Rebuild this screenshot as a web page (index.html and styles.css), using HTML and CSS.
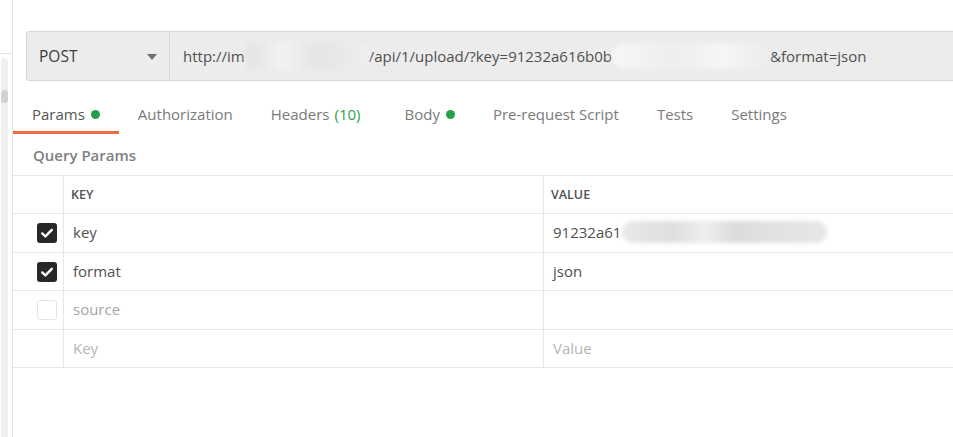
FILE: index.html
```html
<!DOCTYPE html>
<html lang="en">
<head>
<meta charset="utf-8">
<title>Request</title>
<link rel="stylesheet" href="styles.css">
</head>
<body>
<div class="app">
  <aside class="side">
    <div class="side-top"></div>
    <div class="scroll"><div class="thumb"></div></div>
  </aside>
  <main class="main">
    <div class="reqbar">
      <div class="method">
        <span class="method-name">POST</span>
        <span class="caret"></span>
      </div>
      <div class="url">http://im<span class="blur blur-url1"></span>/api/1/upload/?key=91232a616b0b<span class="blur blur-url2"></span>&amp;format=json</div>
    </div>
    <nav class="tabs">
      <div class="tab active">Params<span class="dot"></span></div>
      <div class="tab">Authorization</div>
      <div class="tab">Headers <span class="count">(10)</span></div>
      <div class="tab tab-body">Body<span class="dot"></span></div>
      <div class="tab">Pre-request Script</div>
      <div class="tab">Tests</div>
      <div class="tab">Settings</div>
    </nav>
    <div class="qp">Query Params</div>
    <div class="table">
      <div class="row head">
        <div class="cell sel"></div>
        <div class="cell hcell">KEY</div>
        <div class="cell hcell last">VALUE</div>
      </div>
      <div class="row">
        <div class="cell sel"><span class="cb on"><svg viewBox="0 0 20 20" width="20" height="20"><path d="M5.2 10.4 L8.4 13.4 L14.8 6.8" fill="none" stroke="#fff" stroke-width="2.4" stroke-linecap="round" stroke-linejoin="round"/></svg></span></div>
        <div class="cell txt">key</div>
        <div class="cell txt last">91232a61<span class="blur blur-val"></span></div>
      </div>
      <div class="row">
        <div class="cell sel"><span class="cb on"><svg viewBox="0 0 20 20" width="20" height="20"><path d="M5.2 10.4 L8.4 13.4 L14.8 6.8" fill="none" stroke="#fff" stroke-width="2.4" stroke-linecap="round" stroke-linejoin="round"/></svg></span></div>
        <div class="cell txt">format</div>
        <div class="cell txt last">json</div>
      </div>
      <div class="row">
        <div class="cell sel"><span class="cb off"></span></div>
        <div class="cell txt disabled">source</div>
        <div class="cell txt last"></div>
      </div>
      <div class="row">
        <div class="cell sel"></div>
        <div class="cell txt ph">Key</div>
        <div class="cell txt last ph">Value</div>
      </div>
    </div>
  </main>
</div>
</body>
</html>
```

FILE: styles.css
```css
* { box-sizing: border-box; }
html, body {
  margin: 0;
  padding: 0;
  background: #fff;
}
body {
  width: 953px;
  height: 437px;
  overflow: hidden;
  font-family: "Open Sans", "Noto Sans", sans-serif;
  font-size: 15px;
  color: #505050;
}
.app {
  display: flex;
  height: 437px;
}
.side {
  width: 13px;
  flex: none;
  border-right: 1px solid #e3e3e3;
  display: flex;
  flex-direction: column;
}
.side-top {
  height: 54px;
  border-bottom: 1px solid #e3e3e3;
  flex: none;
}
.scroll {
  flex: 1;
  margin: 4px 0 0 1px;
  width: 7px;
  background: #efefef;
  border-radius: 4px 4px 0 0;
}
.thumb {
  margin-top: 32px;
  height: 13px;
  background: #d2d2d2;
  border-radius: 4px;
}
.main {
  flex: 1;
  min-width: 0;
  overflow: hidden;
}
.reqbar {
  margin: 31px 0 0 13px;
  width: 1000px;
  height: 50px;
  display: flex;
  background: #ececec;
  border: 1px solid #d8d8d8;
  border-right: none;
  border-radius: 3px 0 0 3px;
}
.method {
  width: 143px;
  flex: none;
  display: flex;
  align-items: center;
  justify-content: space-between;
  padding: 0 12px 0 12px;
  border-right: 1px solid #d8d8d8;
}
.method-name {
  color: #3c3c3c;
  font-size: 15.5px;
  line-height: 20px;
}
.caret {
  width: 0;
  height: 0;
  border-left: 5px solid transparent;
  border-right: 5px solid transparent;
  border-top: 6px solid #707070;
  margin-top: 1px;
}
.url {
  display: flex;
  align-items: center;
  padding-left: 13px;
  color: #505050;
  white-space: nowrap;
}
.blur {
  display: inline-block;
  border-radius: 12px;
  filter: blur(2px);
}
.blur-url1 {
  width: 124px;
  height: 28px;
  background: linear-gradient(90deg, #e2e2e2 0%, #f2f2f2 30%, #e4e4e4 60%, #f0f0f0 100%);
}
.blur-url2 {
  width: 158px;
  height: 26px;
  background: linear-gradient(90deg, #f6f6f6 0%, #eeeeee 40%, #f6f6f6 70%, #ececec 100%);
}
.blur-val {
  width: 205px;
  height: 22px;
  margin-left: 1px;
  background: linear-gradient(90deg, #e9e9e9 0%, #dedede 25%, #eeeeee 40%, #dcdcdc 55%, #e3e3e3 80%, #e6e6e6 100%);
  vertical-align: middle;
}
.tabs {
  display: flex;
  margin-top: 16px;
}
.tab {
  display: flex;
  align-items: center;
  padding: 7px 19px;
  line-height: 20px;
  height: 37px;
  border-bottom: 3px solid transparent;
  color: #7a7a7a;
  white-space: nowrap;
}
.tab.active {
  color: #555;
  border-bottom-color: #f26b3a;
}
.tab-body { margin-left: 6px; }
.count {
  color: #2e9f4c;
  margin-left: 5px;
}
.dot {
  width: 9px;
  height: 9px;
  border-radius: 50%;
  background: #26a048;
  margin-left: 6px;
}
.qp {
  margin: 11px 0 0 20px;
  line-height: 20px;
  font-weight: 600;
  color: #808080;
  height: 30px;
}
.table {
  border-top: 1px solid #e6e6e6;
}
.row {
  display: grid;
  grid-template-columns: 51px 480px 1fr;
  border-bottom: 1px solid #e6e6e6;
  height: 38px;
}
.row:nth-child(even) { height: 39px; }
.cell {
  display: flex;
  align-items: center;
  padding-left: 9px;
  border-right: 1px solid #e6e6e6;
  white-space: nowrap;
  overflow: hidden;
}
.cell.txt { padding-bottom: 2px; }
.cell.last { border-right: none; }
.cell.sel { padding-left: 24px; }
.hcell {
  padding-left: 7px;
  font-size: 12.5px;
  font-weight: 600;
  color: #505050;
}
.cb {
  width: 20px;
  height: 20px;
  border-radius: 3px;
  display: block;
}
.cb svg { display: block; }
.cb.on { background: #282828; }
.cb.off { border: 1px solid #e4e4e4; background: #fff; }
.disabled { color: #a5a5a5; }
.ph { color: #b5b5b5; }
```
